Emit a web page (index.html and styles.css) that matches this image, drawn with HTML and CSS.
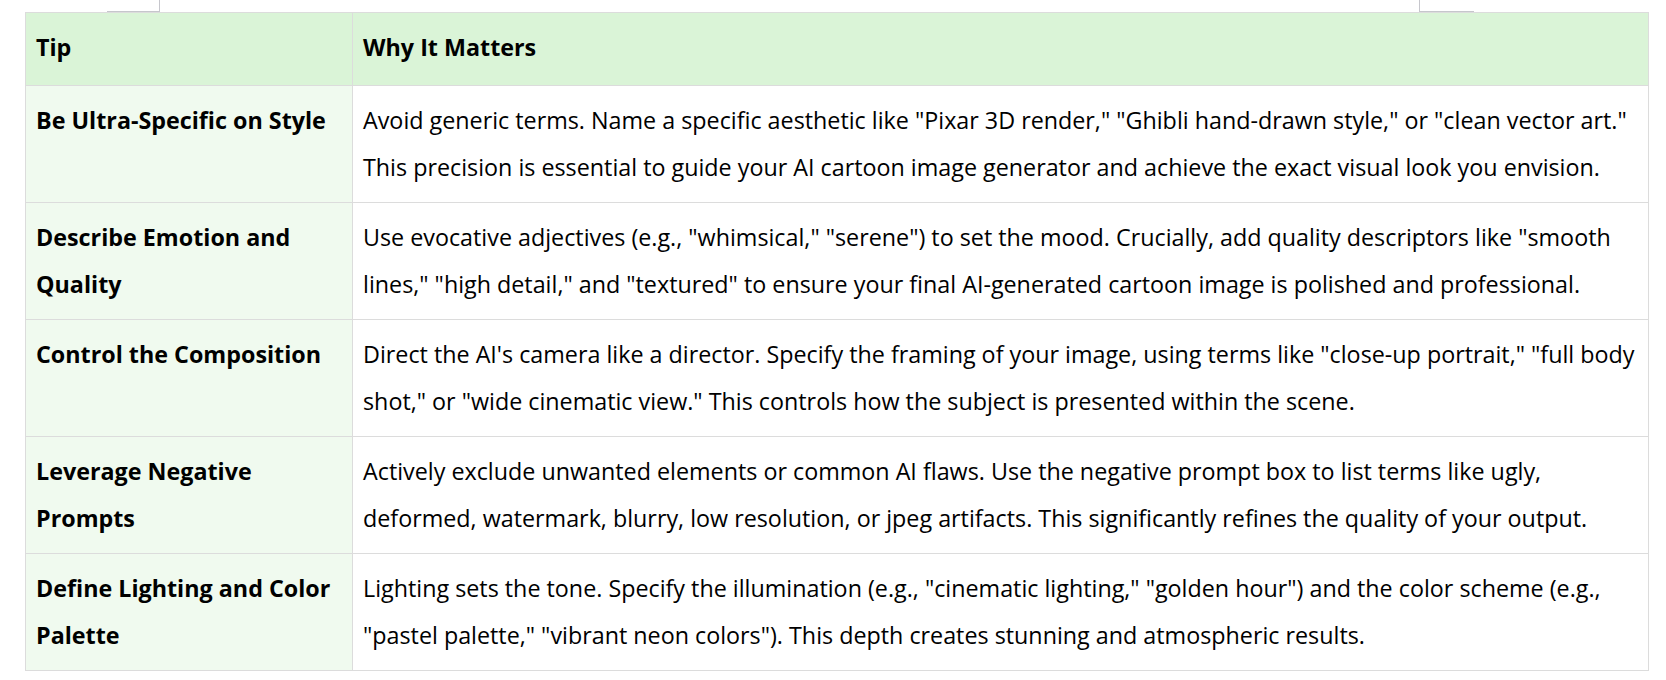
FILE: index.html
```html
<!DOCTYPE html>
<html lang="en">
<head>
<meta charset="utf-8">
<title>Tips</title>
<link rel="stylesheet" href="styles.css">
</head>
<body>
<div class="top-strip">
  <div class="tab tab-left"></div>
  <div class="tab tab-right"></div>
</div>
<table class="tips">
  <thead>
    <tr><th class="col-tip">Tip</th><th>Why It Matters</th></tr>
  </thead>
  <tbody>
    <tr><td class="col-tip">Be Ultra-Specific on Style</td><td>Avoid generic terms. Name a specific aesthetic like "Pixar 3D render," "Ghibli hand-drawn style," or "clean vector art." This precision is essential to guide your AI cartoon image generator and achieve the exact visual look you envision.</td></tr>
    <tr><td class="col-tip">Describe Emotion and Quality</td><td>Use evocative adjectives (e.g., "whimsical," "serene") to set the mood. Crucially, add quality descriptors like "smooth lines," "high detail," and "textured" to ensure your final AI-generated cartoon image is polished and professional.</td></tr>
    <tr><td class="col-tip">Control the Composition</td><td>Direct the AI's camera like a director. Specify the framing of your image, using terms like "close-up portrait," "full body shot," or "wide cinematic view." This controls how the subject is presented within the scene.</td></tr>
    <tr><td class="col-tip">Leverage Negative Prompts</td><td>Actively exclude unwanted elements or common AI flaws. Use the negative prompt box to list terms like ugly, deformed, watermark, blurry, low resolution, or jpeg artifacts. This significantly refines the quality of your output.</td></tr>
    <tr><td class="col-tip">Define Lighting and Color Palette</td><td>Lighting sets the tone. Specify the illumination (e.g., "cinematic lighting," "golden hour") and the color scheme (e.g., "pastel palette," "vibrant neon colors"). This depth creates stunning and atmospheric results.</td></tr>
  </tbody>
</table>
</body>
</html>
```
FILE: styles.css
```css
html, body {
  margin: 0;
  padding: 0;
  background: #ffffff;
}
body {
  font-family: "Open Sans", "Noto Sans", sans-serif;
  color: #000;
}
.top-strip {
  display: flex;
  justify-content: space-between;
  height: 12px;
  padding: 0 192px 0 107px;
}
.tab {
  height: 11px;
  border-bottom: 1px solid #c6c6cc;
}
.tab-left {
  width: 52px;
  border-right: 1px solid #c6c6cc;
}
.tab-right {
  width: 54px;
  border-left: 1px solid #c6c6cc;
}
.tips {
  margin-left: 25px;
  width: 1624px;
  border-collapse: collapse;
  font-size: 23.3px;
  line-height: 47px;
}
.tips th, .tips td {
  border: 1px solid #dcdcdc;
  padding: 11px 8px 11px 10px;
  text-align: left;
  vertical-align: top;
}
.tips th {
  padding-top: 11px;
  padding-bottom: 14px;
  background: #daf4d7;
  font-weight: 700;
}
.tips td.col-tip {
  background: #f0faef;
  font-weight: 700;
}
.tips .col-tip {
  width: 308px;
}
```
